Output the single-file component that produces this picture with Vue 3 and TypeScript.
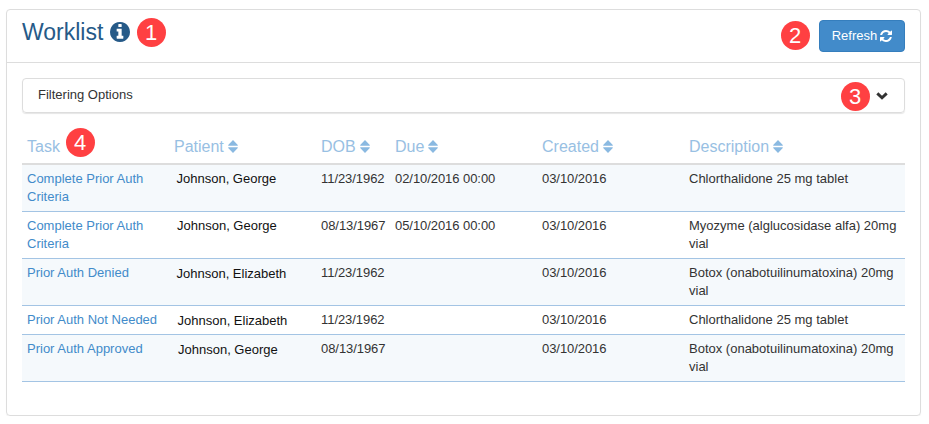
<script setup lang="ts">
interface Column {
  label: string
  sortable: boolean
}

interface Task {
  task: string
  patient: string
  dob: string
  due: string
  created: string
  description: string
  nudge: string
}

const columns: Column[] = [
  { label: 'Task', sortable: false },
  { label: 'Patient', sortable: true },
  { label: 'DOB', sortable: true },
  { label: 'Due', sortable: true },
  { label: 'Created', sortable: true },
  { label: 'Description', sortable: true },
]

const tasks: Task[] = [
  { task: 'Complete Prior Auth Criteria', patient: 'Johnson, George', dob: '11/23/1962', due: '02/10/2016 00:00', created: '03/10/2016', description: 'Chlorthalidone 25 mg tablet', nudge: 'n1' },
  { task: 'Complete Prior Auth Criteria', patient: 'Johnson, George', dob: '08/13/1967', due: '05/10/2016 00:00', created: '03/10/2016', description: 'Myozyme (alglucosidase alfa) 20mg vial', nudge: 'n2' },
  { task: 'Prior Auth Denied', patient: 'Johnson, Elizabeth', dob: '11/23/1962', due: '', created: '03/10/2016', description: 'Botox (onabotuilinumatoxina) 20mg vial', nudge: 'n3' },
  { task: 'Prior Auth Not Needed', patient: 'Johnson, Elizabeth', dob: '11/23/1962', due: '', created: '03/10/2016', description: 'Chlorthalidone 25 mg tablet', nudge: 'n4' },
  { task: 'Prior Auth Approved', patient: 'Johnson, George', dob: '08/13/1967', due: '', created: '03/10/2016', description: 'Botox (onabotuilinumatoxina) 20mg vial', nudge: 'n5' },
]
</script>

<template>
  <main class="panel">
    <header class="heading">
      <h1 class="title">
        Worklist
        <svg class="info" viewBox="128 128 1536 1536">
          <path d="M1152 1376v-160q0-14-9-23t-23-9h-96v-512q0-14-9-23t-23-9h-320q-14 0-23 9t-9 23v160q0 14 9 23t23 9h96v320h-96q-14 0-23 9t-9 23v160q0 14 9 23t23 9h448q14 0 23-9t9-23zm-128-896v-160q0-14-9-23t-23-9h-192q-14 0-23 9t-9 23v160q0 14 9 23t23 9h192q14 0 23-9t9-23zm640 416q0 209-103 385.5t-279.5 279.5-385.5 103-385.5-103-279.5-279.5-103-385.5 103-385.5 279.5-279.5 385.5-103 385.5 103 279.5 279.5 103 385.5z" />
        </svg>
      </h1>
      <button class="refresh" type="button">
        Refresh
        <svg class="refresh-icon" viewBox="128 128 1536 1536">
          <path d="M1639 1056q0 5-1 7-64 268-268 434.5t-478 166.5q-146 0-282.5-55t-243.5-157l-129 129q-19 19-45 19t-45-19-19-45v-448q0-26 19-45t45-19h448q26 0 45 19t19 45-19 45l-137 137q71 66 161 102t187 36q134 0 250-65t186-179q11-17 53-117 8-23 30-23h192q13 0 22.5 9.5t9.5 22.5zm25-800v448q0 26-19 45t-45 19h-448q-26 0-45-19t-19-45 19-45l138-138q-148-137-349-137-134 0-250 65t-186 179q-11 17-53 117-8 23-30 23h-199q-13 0-22.5-9.5t-9.5-22.5v-7q65-268 270-434.5t480-166.5q146 0 284 55.5t245 156.5l130-129q19-19 45-19t45 19 19 45z" />
        </svg>
      </button>
      <span class="badge b1">1</span>
      <span class="badge b2">2</span>
    </header>

    <div class="body">
      <section class="filter">
        <span>Filtering Options</span>
        <svg class="chevron" viewBox="0 0 12 8">
          <path d="M1.3 1.4 6 5.8 10.7 1.4" />
        </svg>
        <span class="badge b3">3</span>
      </section>

      <div class="table">
        <div class="row head">
          <div v-for="c in columns" :key="c.label" class="th">
            {{ c.label }}
            <svg v-if="c.sortable" class="sort" viewBox="0 0 10 13">
              <path d="M5 0 9.8 4.9Q10.2 5.7 9.4 5.7H.6Q-.2 5.7.2 4.9ZM5 13 .2 8.1Q-.2 7.3.6 7.3H9.4Q10.2 7.3 9.8 8.1Z" />
            </svg>
          </div>
          <span class="badge b4">4</span>
        </div>
        <div v-for="(t, i) in tasks" :key="i" class="row data">
          <div class="cell"><a class="link">{{ t.task }}</a></div>
          <div class="cell patient" :class="t.nudge">{{ t.patient }}</div>
          <div class="cell date">{{ t.dob }}</div>
          <div class="cell date">{{ t.due }}</div>
          <div class="cell date">{{ t.created }}</div>
          <div class="cell">{{ t.description }}</div>
        </div>
      </div>
    </div>
  </main>
</template>

<style>
body {
  background: #fff;
}
</style>

<style scoped>
.panel {
  box-sizing: border-box;
  width: 915px;
  height: 407px;
  margin: 9px 0 0 6px;
  border: 1px solid #ddd;
  border-radius: 4px;
  box-shadow: 0 1px 1px rgba(0, 0, 0, 0.05);
  font: 13px/18px "Liberation Sans", Arial, sans-serif;
  color: #333;
}

.heading {
  position: relative;
  box-sizing: border-box;
  display: flex;
  justify-content: space-between;
  height: 53px;
  padding: 10px 15px 0;
  border-bottom: 1px solid #ddd;
}

.title {
  display: flex;
  gap: 7px;
  height: 24px;
  margin: 0;
  font-size: 23px;
  font-weight: 400;
  line-height: 24px;
  color: #265a88;
}

.info {
  width: 20px;
  height: 20px;
  margin-top: 2px;
  fill: #265a88;
}

.refresh {
  box-sizing: border-box;
  display: flex;
  justify-content: center;
  align-items: center;
  gap: 3px;
  width: 86px;
  height: 32px;
  padding: 0 0 1px;
  border: 1px solid #357ebd;
  border-radius: 4px;
  background: #428bca;
  color: #fff;
  font: inherit;
}

.refresh-icon {
  width: 12px;
  height: 12px;
  fill: #fff;
}

.body {
  padding: 15px 15px 0;
}

.filter {
  position: relative;
  box-sizing: border-box;
  display: flex;
  justify-content: space-between;
  height: 35px;
  padding: 7px 16px 0 15px;
  border: 1px solid #ddd;
  border-radius: 4px;
  box-shadow: 0 1px 1px rgba(0, 0, 0, 0.1);
}

.chevron {
  width: 12px;
  height: 8px;
  margin-top: 6px;
  fill: none;
  stroke: #333;
  stroke-width: 2.9;
}

.table {
  margin-top: 20px;
}

.row {
  display: grid;
  grid-template-columns: 147px 147px 74px 147px 147px 221px;
}

.head {
  position: relative;
  box-sizing: border-box;
  height: 32px;
  border-bottom: 2px solid #ddd;
}

.th {
  display: flex;
  gap: 4px;
  padding: 5px 0 0 5px;
  font-size: 16px;
  line-height: 18px;
  color: #98c0e3;
}

.sort {
  width: 10px;
  height: 13px;
  margin-top: 2px;
  fill: #8ab9e1;
}

.data {
  border-bottom: 1px solid #a3c4e4;
}

.data:nth-child(even) {
  background: #f5f9fc;
}

.cell {
  padding: 5px;
}

.date {
  padding-right: 0;
  letter-spacing: -0.06px;
}

.link {
  color: #428bca;
}

.patient {
  padding-right: 0;
  color: #111;
}

.n1 { padding-left: 7.5px; }
.n2 { padding-left: 8px; }
.n3 { padding-left: 7.5px; padding-top: 6px; padding-bottom: 4px; }
.n4 { padding-left: 8.5px; padding-top: 6px; padding-bottom: 4px; }
.n5 { padding-left: 9px; padding-top: 6px; padding-bottom: 4px; }

.badge {
  position: absolute;
  width: 29px;
  height: 29px;
  border-radius: 50%;
  background: #ff4042;
  color: #fff;
  font-size: 22px;
  line-height: 30px;
  text-align: center;
}

.b1 { left: 129.7px; top: 7.5px; }
.b2 { left: 773.7px; top: 10.5px; }
.b3 { left: 817.5px; top: 2.5px; }
.b4 { left: 43.5px; top: -4.7px; }
</style>
